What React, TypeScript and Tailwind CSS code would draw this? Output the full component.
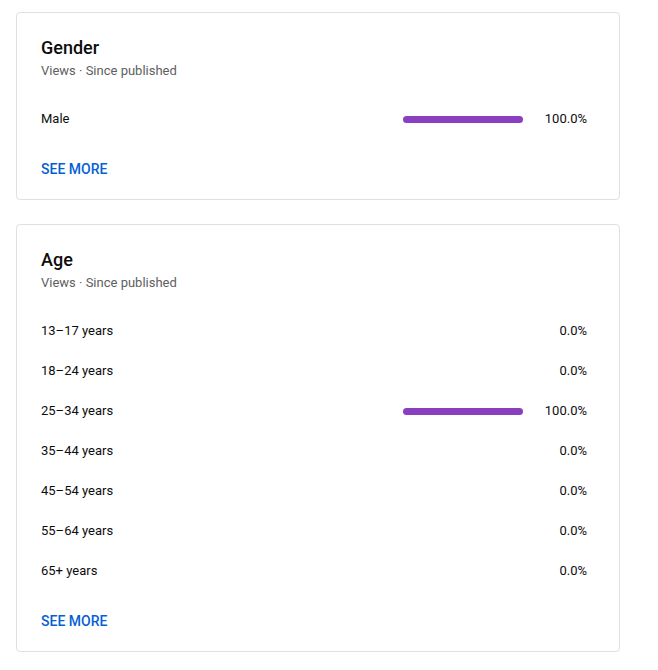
import React from 'react';

interface Row {
  label: string;
  value: number;
}

const gender: Row[] = [{ label: 'Male', value: 100 }];

const age: Row[] = [
  { label: '13–17 years', value: 0 },
  { label: '18–24 years', value: 0 },
  { label: '25–34 years', value: 100 },
  { label: '35–44 years', value: 0 },
  { label: '45–54 years', value: 0 },
  { label: '55–64 years', value: 0 },
  { label: '65+ years', value: 0 },
];

const Card: React.FC<{ title: string; rows: Row[] }> = ({ title, rows }) => (
  <div className="bg-white border border-[#e0e0e0] rounded-[4px] pl-[24px] pr-[32px] pt-[23px] pb-[20px]">
    <h3 className="text-[18px] leading-[24px] font-medium text-[#0d0d0d]">{title}</h3>
    <p className="mt-[2px] text-[13px] leading-[18px] text-[#606060]">Views · Since published</p>
    <div className="mt-[19px]">
      {rows.map((r) => (
        <div key={r.label} className="flex items-center h-[40px] text-[13px] text-[#0d0d0d]">
          <span className="flex-1">{r.label}</span>
          {r.value > 0 && (
            <div className="w-[120px] h-[7px] rounded-full bg-[#8a3fbe]" />
          )}
          <span className="w-[64px] text-right">{r.value.toFixed(1)}%</span>
        </div>
      ))}
    </div>
    <button className="mt-[20px] block text-[14px] leading-[20px] font-medium text-[#065fd4] uppercase">
      See more
    </button>
  </div>
);

export default function App() {
  return (
    <div className="bg-white min-h-screen pt-[12px] pl-[16px] w-[620px] flex flex-col gap-[24px]" style={{ fontFamily: 'Roboto, "Noto Sans", sans-serif' }}>
      <Card title="Gender" rows={gender} />
      <Card title="Age" rows={age} />
    </div>
  );
}
